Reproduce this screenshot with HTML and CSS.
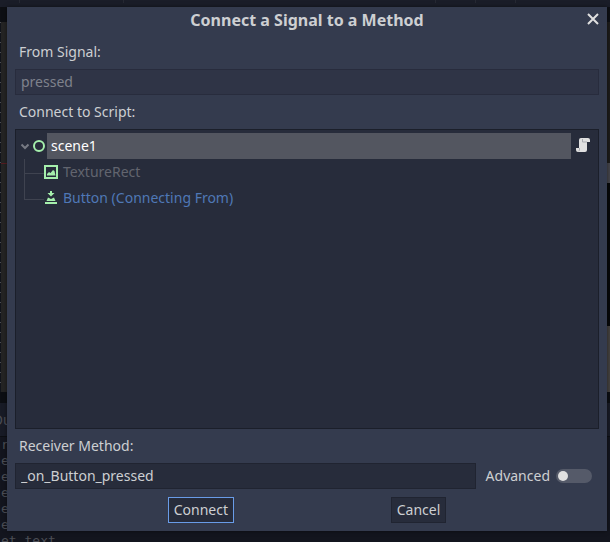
FILE: index.html
```html
<!DOCTYPE html>
<html lang="en">
<head>
    <meta charset="UTF-8">
    <meta name="viewport" content="width=device-width, initial-scale=1.0">
    <title>Connect a Signal to a Method</title>
    <link rel="stylesheet" href="styles.css">
</head>
<body>
    <div class="editor">
        <div class="editor-top">
            <span></span><span></span><span></span><span></span><span></span>
        </div>
        <div class="viewport">
            <div class="ruler"></div>
            <div class="scene"></div>
        </div>
        <div class="output-head">Output</div>
        <div class="output-log">
            <p>r</p>
            <p>e</p>
            <p>e</p>
            <p>e</p>
            <p>e</p>
            <p>e</p>
            <p>et_text</p>
        </div>
    </div>

    <form class="dialog">
        <header class="title-bar">
            <h1>Connect a Signal to a Method</h1>
            <button type="button" class="close" aria-label="Close">
                <svg width="12" height="12" viewBox="0 0 12 12"><path d="M1 1l10 10M11 1L1 11"/></svg>
            </button>
        </header>

        <label for="signal">From Signal:</label>
        <input type="text" id="signal" class="field" value="pressed" disabled>

        <div class="caption">Connect to Script:</div>
        <ul class="tree">
            <li class="root">
                <svg class="arrow" width="10" height="10" viewBox="0 0 10 10"><path d="M1.5 3.5l3.5 3.5 3.5-3.5"/></svg>
                <svg class="node" width="14" height="14" viewBox="0 0 14 14"><circle cx="7" cy="7" r="5"/></svg>
                <span class="selected">scene1</span>
                <svg class="script" width="16" height="16" viewBox="0 0 16 16">
                    <path d="M6 0h7a2 2 0 0 1 2 2v2h-3v8a2 2 0 0 1-2 2H3a2 2 0 0 1-2-2v-2h3V2a2 2 0 0 1 2-2z" fill="#e0e0e0"/>
                    <path d="M7.5 1v3H12M4.5 10v2a1 1 0 0 1-1 1" fill="none" stroke="#a9abb0"/>
                </svg>
            </li>
            <li class="child off">
                <svg width="14" height="14" viewBox="0 0 14 14">
                    <path d="M0 0h14v14H0zM2 2v10h10V2z" fill-rule="evenodd"/>
                    <path d="M3 10.500V9l2-2 1.500 1L9 5l1.500 1 1 4.500z"/>
                </svg>
                <span>TextureRect</span>
            </li>
            <li class="child from">
                <svg width="14" height="14" viewBox="0 0 14 14">
                    <path d="M6 0h2v2h2.500L7 5.500 3.500 2H6zM4 6.500L7 8l3-1.500 1.500 3.500h-9zM1 11h12v2H1z"/>
                </svg>
                <span>Button (Connecting From)</span>
            </li>
        </ul>

        <label for="method">Receiver Method:</label>
        <div class="method-row">
            <input type="text" id="method" class="field" value="_on_Button_pressed">
            <label for="advanced">Advanced</label>
            <input type="checkbox" id="advanced" class="switch">
        </div>

        <div class="buttons">
            <button type="button" class="btn connect">Connect</button>
            <button type="button" class="btn">Cancel</button>
        </div>
    </form>
</body>
</html>
```
FILE: styles.css
```css
*{
    box-sizing: border-box;
}

body{
    margin: 0;
    font-family: "Noto Sans", sans-serif;
    font-size: 14px;
    line-height: 26px;
    color: #cdcfd2;
    background-color: #13151e;
}

/* dimmed editor behind the dialog */
.editor{
    height: 100vh;
    overflow: hidden;
    display: flex;
    flex-direction: column;
    color: #4b4d54;
}

.editor-top{
    height: 22px;
    display: grid;
    grid-template-columns: 20px 104px 312px 40px 40px;
    background: linear-gradient(#1a1d28 7px, #0d0f14 7px);
}

.editor-top span{
    height: 3px;
    border-right: 1px solid #262933;
}

.viewport{
    flex: 1;
    display: flex;
}

.ruler{
    width: 1px;
    background: repeating-linear-gradient(#4a4c52 0 1px, #11141b 1px 10px);
}

.scene{
    flex: 1;
    background: linear-gradient(#242424 141px, #561c22 141px 142px, #242424 142px);
}

.scene::after{
    content: "";
    display: block;
    width: 3px;
    height: 100%;
    margin-left: auto;
    background: linear-gradient(#1d1c1b 141px, #45444a 141px 161px, #07080a 161px 304px, #44413f 304px);
}

.output-head{
    height: 45px;
    padding-top: 14px;
    border-top: 11px solid #0c0e13;
    border-bottom: 1px solid #0c0e13;
    line-height: 6px;
    text-indent: -8px;
    background-color: #181b26;
}

.output-log{
    height: 105px;
    padding-left: 1px;
    font-family: "DejaVu Sans Mono", monospace;
    font-size: 13px;
    line-height: 16px;
}

.output-log p{
    margin: 0;
}

.dialog{
    position: absolute;
    inset: 7px 3px 11px 7px;
    padding: 0 8px 8px;
    display: flex;
    flex-direction: column;
    gap: 4px;
    background-color: #343b4e;
    box-shadow: 0 0 4px rgba(0, 0, 0, 0.5);
}

.dialog>label,
.caption{
    padding-left: 4px;
}

.title-bar{
    display: grid;
    grid-template-columns: 1fr auto 1fr;
    margin-bottom: 2px;
}

.title-bar h1{
    grid-column: 2;
    margin: 0;
    font-size: 16px;
    line-height: 26px;
}

.close{
    align-self: start;
    justify-self: end;
    padding: 6px 0;
    border: none;
    background: none;
    line-height: 0;
}

.close path{
    fill: none;
    stroke: #e0e0e0;
    stroke-width: 2;
}

.field{
    height: 26px;
    min-width: 0;
    padding: 0 5px;
    border: 1px solid #202431;
    background-color: #272c3b;
    font: inherit;
    color: #cdcfd2;
}

.field:disabled{
    border-color: #282c3d;
    background-color: #2f3446;
    color: #7f828c;
}

.tree{
    flex: 1;
    margin: 0;
    padding: 3px 4px;
    border: 1px solid #1b1f2a;
    background-color: #272c3b;
    list-style: none;
}

.tree li{
    height: 26px;
    display: flex;
    align-items: center;
}

.arrow path{
    fill: none;
    stroke: #777a84;
    stroke-width: 2;
}

.node{
    margin: 0 1px 0 2px;
    fill: none;
    stroke: #a5efac;
    stroke-width: 2;
}

.selected{
    flex: 1;
    padding-left: 4px;
    background-color: #535660;
    color: #fff;
}

.script{
    margin: 0 3px 0 4px;
}

.child svg{
    margin-right: 5px;
    fill: #a5efac;
}

/* guide lines of the tree */
.child::before{
    content: "";
    align-self: flex-start;
    width: 19px;
    height: 14px;
    margin-left: 4px;
    border-left: 1px solid #3f4350;
    border-bottom: 1px solid #3f4350;
}

.off{
    color: #62656f;
    background: linear-gradient(#3f4350, #3f4350) 4px 0 / 1px 100% no-repeat;
}

.from{
    color: #4f78b6;
}

.method-row{
    display: flex;
    align-items: center;
    padding-right: 7px;
}

.method-row .field{
    flex: 1;
    margin-right: 10px;
}

.switch{
    appearance: none;
    width: 36px;
    height: 14px;
    margin: 0 0 0 6px;
    padding: 2px;
    border-radius: 7px;
    background-color: #555a69;
}

.switch::before{
    content: "";
    display: block;
    width: 10px;
    height: 10px;
    border-radius: 50%;
    background-color: #e0e0e0;
}

.switch:checked::before{
    margin-left: auto;
}

.buttons{
    display: flex;
    justify-content: space-evenly;
    margin-top: 4px;
}

.btn{
    height: 26px;
    margin: 0 4px;
    padding: 0 5px;
    border: 1px solid #202431;
    background-color: #272c3b;
    font: inherit;
    line-height: 24px;
    color: #cdcfd2;
}

.connect{
    border-color: #699ce8;
}
```
